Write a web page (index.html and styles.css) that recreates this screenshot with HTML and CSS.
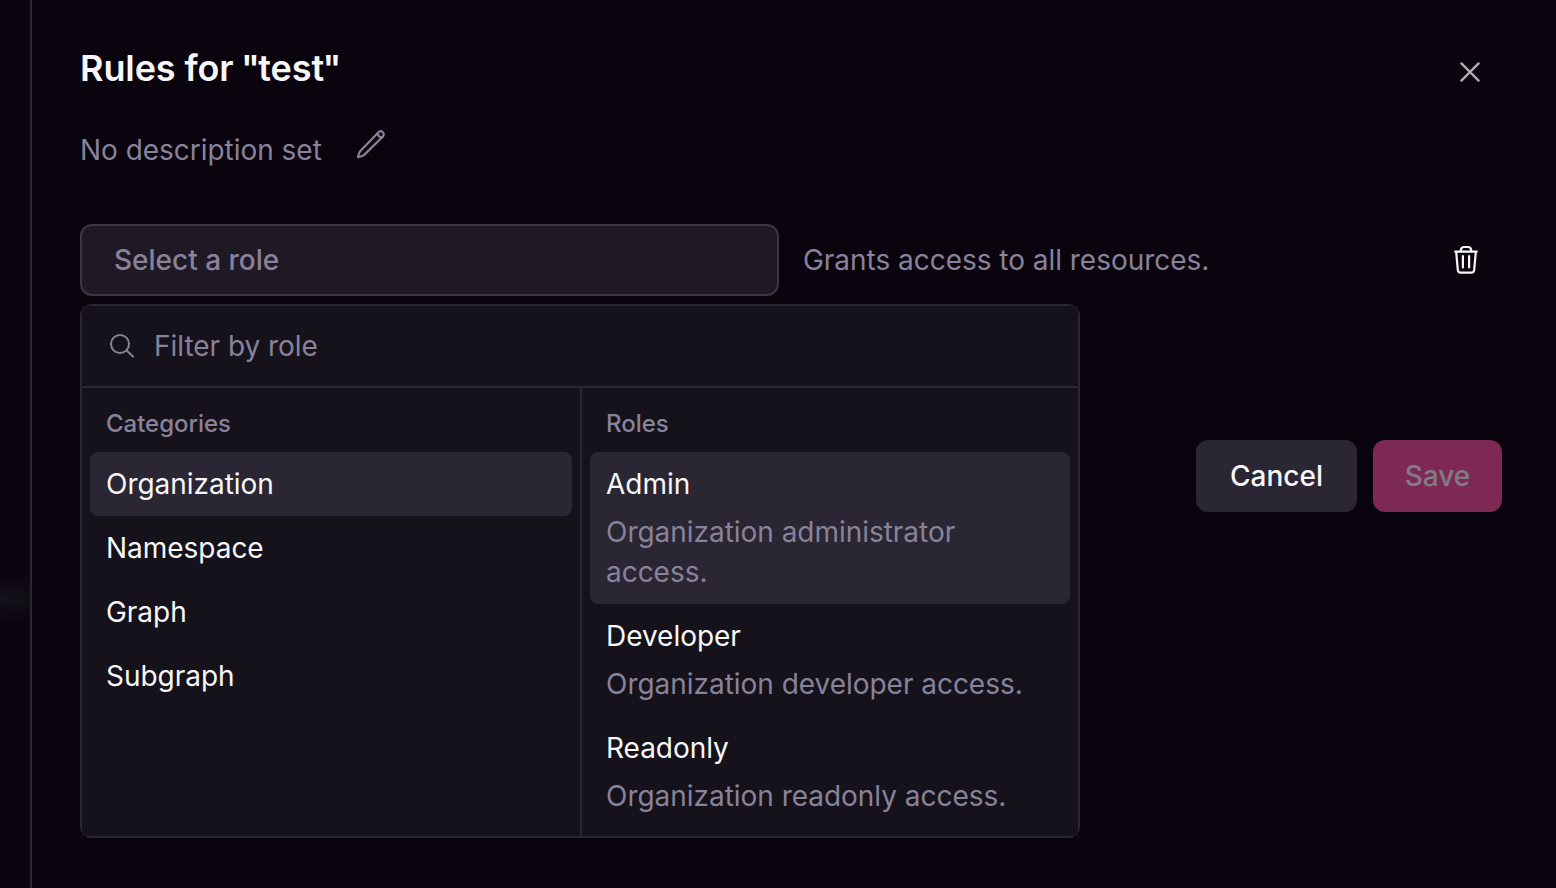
FILE: index.html
```html
<!DOCTYPE html>
<html lang="en">
<head>
<meta charset="utf-8">
<title>Group rules</title>
<link rel="stylesheet" href="styles.css">
</head>
<body>
<div class="backdrop"></div>
<main class="sheet">
  <header class="header">
    <h1 class="title">Rules for <span class="quote">"</span>test<span class="quote">"</span></h1>
    <button class="icon-btn close" aria-label="Close"><svg width="30" height="30" viewBox="0 0 30 30" fill="none" stroke="currentColor" stroke-width="2.300" stroke-linecap="round"><path d="M6.400 6.400L23.600 23.600M23.600 6.400L6.400 23.600"/></svg></button>
  </header>
  <div class="description">
    <span>No description set</span>
    <button class="icon-btn" aria-label="Edit description"><svg width="32" height="32" viewBox="0 0 32 32" fill="none" stroke="currentColor" stroke-width="2.200" stroke-linejoin="round" stroke-linecap="round"><path d="M4 28.200L4.900 24.800Q5.500 22.800 6.800 21.400L24.300 3.400C25.600 2.100 27.500 2 28.800 3.200S30 6.500 28.700 7.800L10.700 25.400Q9.400 26.700 7.400 27.200Z"/><path d="M24.100 3.800C23.400 6.400 25.600 8.800 28.300 8.100"/></svg></button>
  </div>
  <section class="rule">
    <div class="picker">
      <button class="select">Select a role</button>
      <div class="menu">
        <div class="search">
          <svg width="30" height="30" viewBox="0 0 30 30" fill="none" stroke="currentColor" stroke-width="2" stroke-linecap="round"><circle cx="13" cy="13" r="9"/><path d="M19.600 19.600L26 25.600"/></svg>
          <span>Filter by role</span>
        </div>
        <div class="columns">
          <div class="column">
            <div class="label">Categories</div>
            <div class="item active">Organization</div>
            <div class="item">Namespace</div>
            <div class="item">Graph</div>
            <div class="item">Subgraph</div>
          </div>
          <div class="column">
            <div class="label">Roles</div>
            <div class="item active">Admin<p class="hint">Organization administrator access.</p></div>
            <div class="item">Developer<p class="hint">Organization developer access.</p></div>
            <div class="item">Readonly<p class="hint">Organization readonly access.</p></div>
          </div>
        </div>
      </div>
    </div>
    <span class="grant">Grants access to all resources.</span>
    <button class="icon-btn trash" aria-label="Delete rule"><svg width="32" height="32" viewBox="0 0 32 32" fill="none" stroke="currentColor" stroke-width="2.200" stroke-linecap="round" stroke-linejoin="round"><path d="M5.200 7.600H26.800M10.800 7.200V6.500Q10.800 3 14.200 3H17.800Q21.200 3 21.200 6.500V7.200M6.200 8L7.800 26Q8.100 28.700 10.500 28.700H21.500Q23.900 28.700 24.200 26L25.800 8M12.900 12V23.500M19.100 12V23.500"/></svg></button>
  </section>
  <footer class="actions">
    <button class="btn cancel">Cancel</button>
    <button class="btn save" disabled>Save</button>
  </footer>
</main>
</body>
</html>
```
FILE: styles.css
```css
* { box-sizing: border-box; }
body {
  margin: 0;
  display: flex;
  height: 888px;
  overflow: hidden;
  background: #0a040f;
  color: #f7f7f7;
  font: 400 28px/40px Inter, sans-serif;
  letter-spacing: -0.03px;
}
button {
  margin: 0;
  padding: 0;
  border: 0;
  background: none;
  color: inherit;
  font: inherit;
}
svg { display: block; flex: none; }
.backdrop {
  flex: none;
  width: 30px;
  background: radial-gradient(ellipse 80px 24px at 0 598px, #15121a, #0a050f);
}
.sheet {
  flex: 1;
  padding: 48px 54px 0 48px;
  border-left: 2px solid #2a2633;
}
.header { display: flex; justify-content: space-between; height: 62px; }
.title { margin: 0; font-size: 36px; line-height: 40px; font-weight: 600; letter-spacing: -0.1px; }
.quote { margin-left: -1.500px; letter-spacing: -1.500px; }
.icon-btn { flex: none; }
.close { height: 30px; margin: 9px 17px 0 0; color: #b1afb3; }
.description { display: flex; gap: 32px; height: 114px; padding-top: 20px; color: #88829a; }
.description .icon-btn { height: 32px; margin-top: -1px; }
.rule { display: flex; align-items: center; height: 72px; color: #88829a; }
.picker { position: relative; width: 699px; }
.select {
  display: block;
  width: 100%;
  height: 72px;
  padding-left: 32px;
  border: 2px solid #3b3547;
  border-radius: 12px;
  background: #1e1925;
  font-weight: 500;
  text-align: left;
}
.grant { margin-left: 24px; }
.trash { margin: 0 20px 0 auto; color: #f7f7f7; }
.menu {
  position: absolute;
  top: 80px;
  left: 0;
  width: 1000px;
  height: 534px;
  display: flex;
  flex-direction: column;
  border: 2px solid #2a2633;
  border-radius: 12px;
}
.search {
  display: flex;
  align-items: center;
  gap: 17px;
  height: 82px;
  padding-left: 25px;
  border-bottom: 2px solid #2a2633;
  background: #15121b;
}
.search svg { color: #88868b; }
.columns { display: grid; grid-template-columns: 500px 1fr; flex: 1; background: #15121b; }
.column { padding: 8px; }
.column:first-child { border-right: 2px solid #2a2633; }
.label { height: 56px; padding: 8px 16px; font-size: 24px; font-weight: 500; }
.item { padding: 12px 16px; border-radius: 8px; color: #f7f7f7; }
.item.active { background: #2a2633; }
.hint { margin: 8px 0 0; color: #88829a; }
.actions { display: flex; justify-content: flex-end; gap: 16px; margin-top: 144px; }
.btn { height: 72px; border-radius: 12px; font-weight: 500; }
.cancel { width: 161px; background: #2a2633; }
.save { width: 129px; background: #7e2955; color: #827b87; }
```
